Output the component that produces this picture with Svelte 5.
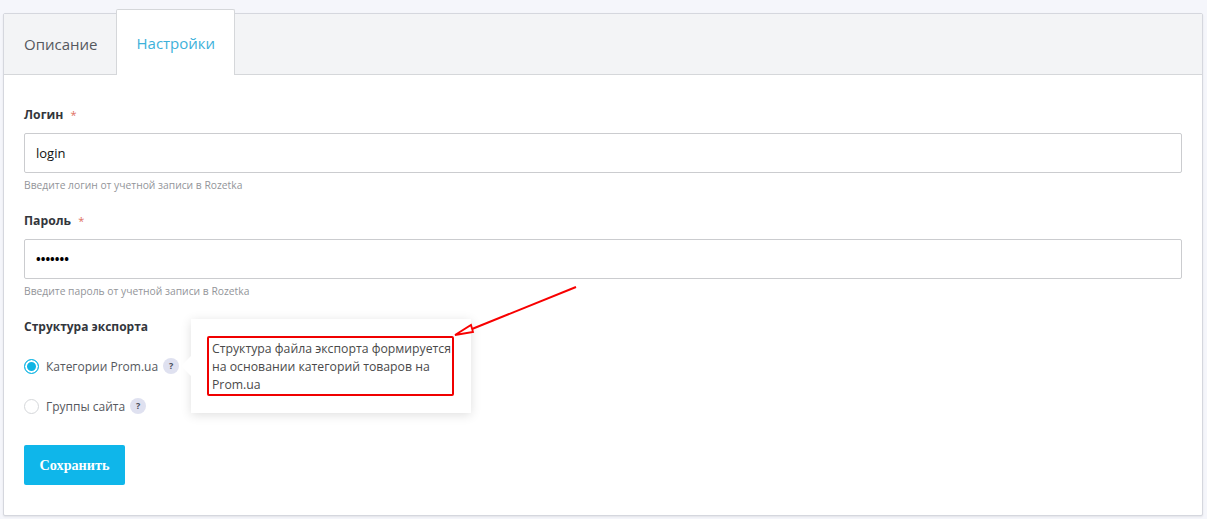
<script>
  let login = "login";
  let password = "1234567";
  let structure = "prom";
</script>

<main>
  <div class="card">
    <div class="tabs">
      <button class="tab">Описание</button>
      <button class="tab active">Настройки</button>
    </div>
    <form class="body" on:submit|preventDefault>
      <div class="field">
        <label for="login">Логин <span class="req">*</span></label>
        <input id="login" type="text" bind:value={login}>
        <p class="hint">Введите логин от учетной записи в Rozetka</p>
      </div>
      <div class="field">
        <label for="password">Пароль <span class="req">*</span></label>
        <input id="password" class="pass" type="password" bind:value={password}>
        <p class="hint">Введите пароль от учетной записи в Rozetka</p>
      </div>
      <div class="group">
        <div class="title">Структура экспорта</div>
        <div class="radio-row">
          <label class="radio">
            <input type="radio" bind:group={structure} value="prom">
            <span class="dot"></span>
            Категории Prom.ua
          </label>
          <span class="help">?</span>
          <div class="tooltip">
            <span class="nub"></span>
            <p>Структура файла экспорта формируется на основании категорий товаров на Prom.ua</p>
          </div>
        </div>
        <div class="radio-row second">
          <label class="radio">
            <input type="radio" bind:group={structure} value="site">
            <span class="dot"></span>
            Группы сайта
          </label>
          <span class="help">?</span>
        </div>
      </div>
      <button class="save" type="submit">Сохранить</button>
    </form>
  </div>

  <svg class="arrow" width="130" height="60" viewBox="0 0 130 60" aria-hidden="true">
    <path d="M126 2 L22 44" stroke="#f80000" stroke-width="2" fill="none"/>
    <path d="M5 50 L21 40 L23 47 Z" stroke="#f80000" stroke-width="1.8" fill="#fff"/>
  </svg>
</main>

<style>
  :global(body) {
    background-color: #f5f6fb;
  }

  main {
    position: relative;
    height: 519px;
    padding: 13px 4px 3px 3px;
    box-sizing: border-box;
    font-family: "Open Sans", "Noto Sans", sans-serif;
    overflow: hidden;
  }

  .card {
    height: 503px;
    box-sizing: border-box;
    background-color: #fff;
    border: 1px solid #d5d7de;
    border-radius: 2px;
    box-shadow: 0 1px 2px rgba(0, 0, 0, 0.08);
  }

  .tabs {
    display: flex;
    height: 60px;
    background-color: #f3f4f6;
    border-bottom: 1px solid #d5d7da;
  }

  .tab {
    height: 60px;
    padding: 0 19px 0 20px;
    border: none;
    background: none;
    font: inherit;
    font-size: 15px;
    color: #55585e;
    cursor: pointer;
  }

  .tab.active {
    height: 66px;
    margin-top: -5px;
    padding: 0 19px;
    background-color: #fff;
    border: 1px solid #d5d7da;
    border-bottom: none;
    border-radius: 2px 2px 0 0;
    color: #3db1da;
  }

  .body {
    padding: 31px 20px 0 20px;
  }

  .field {
    margin-bottom: 20px;
  }

  .field label {
    display: block;
    font-size: 12.2px;
    font-weight: 700;
    line-height: 18px;
    color: #33363c;
    margin-bottom: 9px;
  }

  .req {
    margin-left: 4px;
    font-size: 11px;
    font-weight: 400;
    color: #e0705f;
  }

  .field input {
    display: block;
    width: 100%;
    height: 40px;
    box-sizing: border-box;
    padding: 0 11px;
    border: 1px solid #cbcccf;
    border-radius: 2px;
    font-family: inherit;
    font-size: 13px;
    color: #111;
    outline: none;
  }

  .field input.pass {
    color: #000;
    font-size: 12.5px;
    font-weight: 700;
  }

  .hint {
    margin: 5px 0 0 0;
    font-size: 10.3px;
    line-height: 14px;
    color: #93959a;
  }

  .title {
    font-size: 12px;
    font-weight: 700;
    line-height: 18px;
    color: #33363c;
  }

  .radio-row {
    position: relative;
    display: flex;
    align-items: center;
    gap: 5px;
    height: 20px;
    margin-top: 20px;
  }

  .radio {
    display: flex;
    align-items: center;
    font-size: 12px;
    color: #55585e;
    cursor: pointer;
  }

  .radio input {
    display: none;
  }

  .dot {
    width: 13px;
    height: 13px;
    margin-right: 7px;
    border: 1px solid #d5d7da;
    border-radius: 50%;
    background-color: #fff;
    box-sizing: content-box;
  }

  .radio input:checked + .dot {
    border-color: #10b5e4;
    background-color: #10b5e4;
    box-shadow: inset 0 0 0 2px #fff;
  }

  .help {
    width: 16px;
    height: 16px;
    border-radius: 50%;
    background-color: #dfe1f0;
    color: #4a4d5a;
    font-size: 9px;
    font-weight: 700;
    line-height: 16px;
    text-align: center;
  }

  .tooltip {
    position: absolute;
    left: 167px;
    top: -37px;
    width: 280px;
    height: 94px;
    box-sizing: border-box;
    padding: 17px 16px;
    background-color: #fff;
    box-shadow: 0 2px 10px rgba(0, 0, 0, 0.13);
  }

  .nub {
    position: absolute;
    left: -7px;
    top: 40px;
    width: 14px;
    height: 14px;
    background-color: #fff;
    transform: rotate(45deg);
  }

  .tooltip p {
    width: 247px;
    height: 60px;
    box-sizing: border-box;
    margin: 0;
    padding: 2px 0 0 3px;
    border: 2px solid #f00000;
    border-radius: 2px;
    font-size: 12.25px;
    line-height: 18px;
    color: #4a4a4a;
  }

  .save {
    display: block;
    width: 101px;
    height: 40px;
    margin-top: 29px;
    border: none;
    border-radius: 2px;
    background-color: #0fb6ea;
    color: #fff;
    font-family: "Liberation Serif", serif;
    font-size: 14.2px;
    font-weight: 700;
    cursor: pointer;
  }

  .arrow {
    position: absolute;
    left: 450px;
    top: 285px;
  }
</style>
